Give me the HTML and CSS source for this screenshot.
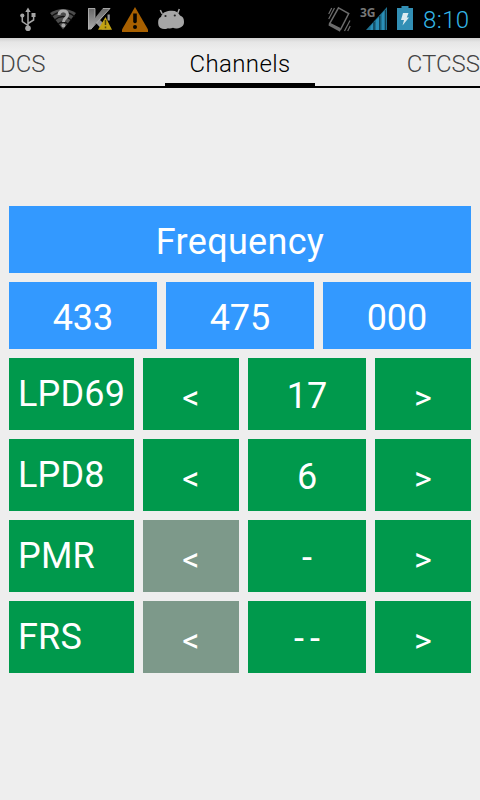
FILE: index.html
```html
<!DOCTYPE html>
<html lang="en">

<head>
  <meta charset="utf-8">
  <meta name="viewport" content="width=device-width">
  <title>Channels</title>
  <link rel="stylesheet" href="styles.css">
</head>

<body>
  <div class="status-bar">
    <div class="notifications">
      <!-- usb -->
      <svg width="18" height="26" viewBox="0 0 18 26">
        <path d="M9 4v18M9 18.500L3.300 14.500V9.500M9 16.500L14.600 13V9" fill="none" stroke="#a5a5a5" stroke-width="1.500"/>
        <path d="M9 .500l2.700 4.500H6.300zM12.500 6h4v4h-4z" fill="#a5a5a5"/>
        <circle cx="3.300" cy="8.500" r="2.100" fill="#a5a5a5"/>
        <circle cx="9" cy="21.300" r="2.800" fill="#a5a5a5"/>
      </svg>
      <!-- wifi -->
      <svg width="26" height="26" viewBox="0 0 26 26">
        <path d="M0 6Q13-2 26 6L13 22.500z" fill="#4c4c4c"/>
        <path d="M1.500 9.500Q13 0 24.500 9.500M4.500 13Q13 6 21.500 13M8 17q5-4 10 0" fill="none" stroke="#111" stroke-width="1.300"/>
        <path d="M9 8q0-4 4.200-4t4.300 3.700c0 3.600-4 3.400-4 7.300" fill="none" stroke="#aaa" stroke-width="3"/>
        <circle cx="13.400" cy="18.500" r="2" fill="#aaa"/>
      </svg>
      <!-- antivirus -->
      <svg width="24" height="26" viewBox="0 0 24 26">
        <defs>
          <linearGradient id="steel" x1="0" y1="0" x2="0" y2="1">
            <stop offset="0" stop-color="#666"/>
            <stop offset="1" stop-color="#aaa"/>
          </linearGradient>
        </defs>
        <path d="M0 1h7v10L15 1h7.500L12 13l10 9.500h-8L8 16l-5 6.500H0z" fill="url(#steel)"/>
        <path d="M.5 22.500V1.500h6.500v9M3 22L22 1.500h-7" fill="none" stroke="#b5b5b5" stroke-width=".8"/>
        <path d="M19.500 7.500h2.300v6h-2.300z" fill="#999"/>
        <path d="M17.500 10L24 22.700H10z" fill="#c2a313"/>
        <path d="M17.500 13v5M17.500 19.500v1.800" stroke="#54480d" stroke-width="1.500"/>
      </svg>
      <!-- warning -->
      <svg width="26" height="26" viewBox="0 0 26 26">
        <path d="M13 0L26 22.500V25H0v-2.500z" fill="#a86000"/>
        <path d="M11.200 6.500h3.600v8.500q-1.800 2.500-3.600 0z" fill="#080500"/>
        <circle cx="13" cy="19.900" r="2" fill="#080500"/>
      </svg>
      <!-- android -->
      <svg width="27" height="26" viewBox="0 0 27 26">
        <path d="M2.300 3.200L4.300 7M21.300 2l-1.500 4" stroke="#a6a6a6" stroke-width="1.500"/>
        <path d="M3 10C4 6 7 4.500 12 3.800c5-.6 8 .7 10 4.700 3 1 4 3 4 6.500 0 4-3 6-7 6.500-1.500.3-3-.2-4-.7-2 .9-4 .7-5 .4-3 1.300-5.500 1.100-7.500-.2C0 19.500 0 16 .300 13.500.700 11.500 1.500 10.500 3 10z" fill="#a6a6a6"/>
        <circle cx="7.500" cy="9" r="1.100" fill="#222"/>
        <circle cx="16.800" cy="8.500" r="1.100" fill="#222"/>
      </svg>
    </div>
    <div class="system">
      <!-- vibrate -->
      <svg width="23" height="26" viewBox="0 0 23 26">
        <path d="M10.500 .800L20.700 6.500 12.500 22.500 1.500 17z" fill="none" stroke="#6c6c6c" stroke-width="1.500"/>
        <path d="M1.500 15.500l11 5.500-.5 3.700L.500 18.500z" fill="#6c6c6c"/>
        <path d="M.700 7L3.700 1M.700 12L6.500 1M16.500 24L22 13.500M19.700 24l2.500-5" fill="none" stroke="#6c6c6c" stroke-width="1.200"/>
      </svg>
      <div class="signal">
        <span class="network">3G</span>
        <svg width="22" height="25" viewBox="0 0 22 25">
          <path d="M0 24L21 1v23z" fill="#1f6f8e"/>
          <path d="M4.500 24v-3.500L7 17v7zM10 24V14l3-3v13zM15.800 24V8l3-4v20z" fill="#2a8fb7"/>
          <path d="M8 24v-8M13.800 24V10M19.300 24V4" stroke="#0d3342" stroke-width="1"/>
        </svg>
      </div>
      <!-- battery -->
      <svg width="16" height="26" viewBox="0 0 16 26">
        <path d="M4.500 -1h7v2H16v22H0V1h4.500z" fill="#328fb5"/>
        <path d="M6 6h5.500L9.800 10.500H12L5.500 18.500l1.500-5.500H4z" fill="#dcebf0"/>
      </svg>
      <span class="clock">8:10</span>
    </div>
  </div>

  <div class="tabs">
    <div class="tab">DCS</div>
    <div class="tab active">Channels</div>
    <div class="tab last">CTCSS</div>
  </div>

  <div class="content">
    <div class="title">Frequency</div>
    <div class="frequency">
      <div>433</div>
      <div>475</div>
      <div>000</div>
    </div>
    <div class="channel">
      <div class="name">LPD69</div>
      <button>&lt;</button>
      <div class="number">17</div>
      <button>&gt;</button>
    </div>
    <div class="channel">
      <div class="name">LPD8</div>
      <button>&lt;</button>
      <div class="number">6</div>
      <button>&gt;</button>
    </div>
    <div class="channel">
      <div class="name">PMR</div>
      <button disabled>&lt;</button>
      <div class="number empty">-</div>
      <button>&gt;</button>
    </div>
    <div class="channel">
      <div class="name">FRS</div>
      <button disabled>&lt;</button>
      <div class="number empty">--</div>
      <button>&gt;</button>
    </div>
  </div>
</body>
</html>
```
FILE: styles.css
```css
* {
  box-sizing: border-box;
}

body {
  margin: 0;
  min-height: 100vh;
  background-color: #eeeeee;
  font-family: Roboto, sans-serif;
}

svg {
  display: block;
  overflow: visible;
}

.status-bar {
  height: 38px;
  padding: 7px 9px 0 19px;
  background-color: #000;
  display: flex;
  justify-content: space-between;
}

.notifications {
  display: flex;
}

.notifications svg:nth-of-type(2) {
  margin-left: 13px;
}

.notifications svg:nth-of-type(3) {
  margin-left: 12px;
}

.notifications svg:nth-of-type(n+4) {
  margin-left: 10px;
}

.system {
  display: flex;
}

.signal {
  display: flex;
  margin: 0 9px 0 9px;
}

.signal svg {
  margin-left: -9px;
  margin-top: -1px;
}

.network {
  font: bold 12px/12px "Open Sans", sans-serif;
  color: #777;
  width: 15px;
}

.clock {
  margin-left: 10px;
  width: 48px;
  font-size: 24px;
  font-weight: 300;
  letter-spacing: 0.4px;
  line-height: 27px;
  color: #33b5e5;
  white-space: nowrap;
}

.tabs {
  height: 50px;
  border-bottom: 2px solid #000;
  background: linear-gradient(#d0d0d0, #e6e6e6 4px, #eeeeee 12px);
  display: grid;
  grid-template-columns: 165px 150px 165px;
}

.tab {
  font-size: 24px;
  font-weight: 300;
  line-height: 53px;
  height: 48px;
  color: #444;
}

.tab.active {
  border-bottom: 3px solid #000;
  color: #000;
  text-align: center;
  letter-spacing: 0.4px;
}

.tab.last {
  text-align: right;
}

.content {
  padding: 118px 9px 0;
  display: grid;
  gap: 9px;
  font-size: 36px;
  color: #fff;
}

.title, .frequency div {
  height: 67px;
  line-height: 73px;
  background-color: #3399ff;
  text-align: center;
}

.title {
  letter-spacing: 0.3px;
}

.frequency {
  display: grid;
  grid-template-columns: repeat(3, 1fr);
  gap: 9px;
}

.channel {
  display: grid;
  grid-template-columns: 125px 96px 118px 96px;
  gap: 9px;
}

.channel .name, .channel .number, .channel button {
  height: 72px;
  background-color: #00994c;
}

.name {
  padding-left: 9px;
  line-height: 73px;
  letter-spacing: 0.2px;
}

.number {
  line-height: 77px;
  text-align: center;
}

.number.empty {
  padding-left: 6px;
  letter-spacing: 6px;
}

.channel button {
  border: none;
  padding: 6px 0 0;
  font-family: inherit;
  font-size: 34px;
  color: #fff;
}

.channel button:disabled {
  background-color: #7d998a;
}
```
